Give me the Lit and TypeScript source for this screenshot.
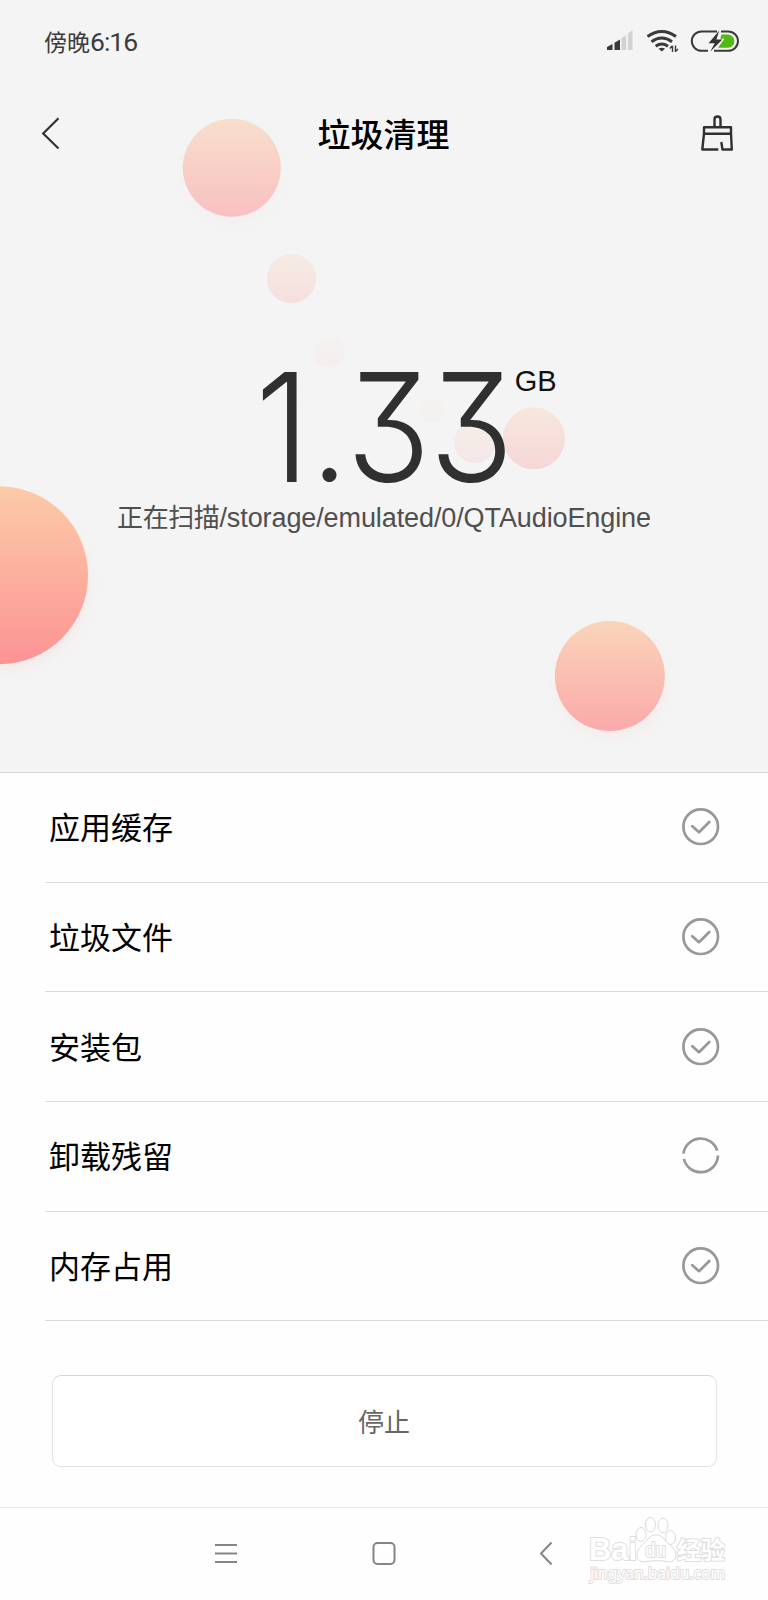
import { LitElement, html, css, svg } from "lit";
import { customElement, property } from "lit/decorators.js";

type Status = "done" | "scanning";

@customElement("status-icon")
class StatusIcon extends LitElement {
  @property() status: Status = "done";
  static styles = css`
    :host { display: block; width: 40px; height: 40px; }
    svg { display: block; }
  `;
  render() {
    const mark = this.status === "done"
      ? svg`<circle cx="19.700" cy="19.700" r="17.3"/><path d="M11.300 19.200l6.700 6 10.300-10.200" stroke-linecap="round" stroke-linejoin="round"/>`
      : svg`<path d="M2.500 17.700A17.3 17.3 0 0 1 36.2 14.700M37 19.500A17.3 17.3 0 0 1 2.900 23"/>`;
    return html`<svg width="40" height="40" fill="none" stroke="#989898" stroke-width="2.7">${mark}</svg>`;
  }
}

@customElement("app-root")
export class AppRoot extends LitElement {
  private rows: { name: string; status: Status }[] = [
    { name: "应用缓存", status: "done" },
    { name: "垃圾文件", status: "done" },
    { name: "安装包", status: "done" },
    { name: "卸载残留", status: "scanning" },
    { name: "内存占用", status: "done" },
  ];

  static styles = css`
    :host {
      display: flex; flex-direction: column; position: relative;
      width: 768px; height: 1600px; overflow: hidden; background: #fefefe; color: #000;
      font-family: "Liberation Sans", "Noto Sans CJK SC", sans-serif;
    }
    svg { display: block; }
    .hero {
      position: relative; z-index: 0; height: 773px; box-sizing: border-box; flex: none;
      background: #f4f4f4; border-bottom: 1px solid #d6d6d6;
      display: flex; flex-direction: column;
    }
    .bubbles { position: absolute; inset: 0; z-index: -1; }
    .statusbar {
      height: 84px; padding: 0 28px 0 44px; display: flex; align-items: center;
      justify-content: space-between; box-sizing: border-box; color: #3c3c3c;
    }
    .time { display: flex; align-items: center; font: 23px/30px "Noto Sans CJK SC", sans-serif; }
    .time span:first-child { padding-bottom: 2px; }
    .clock { font: 26.5px/30px Roboto, sans-serif; letter-spacing: -1px; }
    .header {
      height: 100px; padding: 0 34px 0 40px; display: flex; align-items: center;
      justify-content: space-between;
    }
    .title { margin: 0; font: 500 33px/48px "Noto Sans CJK SC", sans-serif; padding: 0 0 3px 3px; }
    .total { display: flex; margin: 173px 0 0 252px; height: 140px; color: #303030; }
    .digit {
      font: 300 151px/140px Inter, sans-serif; font-feature-settings: "cv09" 1;
      width: 83.3px; text-align: center; transform: scaleX(.92);
    }
    .one { width: 61px; }
    .dot {
      width: 33px; margin-right: -3.3px; font: 400 112px/140px Lato, sans-serif;
      transform: none; padding-top: 11px; height: 129px;
    }
    .unit { font-size: 29px; line-height: 34px; color: #111; margin: 7px 0 0 5.5px; }
    .path {
      display: flex; justify-content: center; font-size: 27px; line-height: 40px; color: #4f4f4f;
      letter-spacing: -0.1px; margin-top: 1px;
    }
    .verb { font: 26px/36px "Noto Sans CJK SC", sans-serif; letter-spacing: -0.4px; }
    .list { display: flex; flex-direction: column; padding-left: 45px; }
    .row {
      height: 109.7px; box-sizing: border-box; border-bottom: 1px solid #dcdcdc;
      display: flex; align-items: center; justify-content: space-between; padding: 0 47px 0 4px;
      font: 31px/46px "Noto Sans CJK SC", sans-serif;
    }
    .name { padding-bottom: 2px; }
    .stop {
      display: flex; align-items: center; justify-content: center; box-sizing: border-box;
      margin: 53.5px 51.5px 0; height: 92px; flex: none; border: 1px solid #e2e2e2; border-top-color: #d4d4d4;
      border-radius: 9px; background: #fff; color: #666; padding: 0;
      font: 26px/38px "Noto Sans CJK SC", sans-serif;
    }
    .nav {
      margin-top: 40.500px; border-top: 1px solid #ececec; flex: 1; display: flex;
      padding-left: 213px;
    }
    .watermark { position: absolute; left: 580px; top: 1510px; }
    .outlined { paint-order: stroke; stroke-width: 2px; stroke: #dedede; }
  `;

  render() {
    return html`
      <section class="hero">
        <svg class="bubbles" width="768" height="772">
          <defs>
            <linearGradient id="warm" x2="0" y2="1">
              <stop offset="0" stop-color="#fccba8"/><stop offset="1" stop-color="#fc9394"/>
            </linearGradient>
            <filter id="soft" x="-20%" y="-20%" width="150%" height="150%">
              <feDropShadow dx="2" dy="7" stdDeviation="6" flood-color="#ff8f8f" flood-opacity=".1"/>
            </filter>
          </defs>
          <g fill="url(#warm)">
            <circle cx="-1" cy="575.3" r="89" filter="url(#soft)"/>
            <circle cx="609.8" cy="676" r="55" opacity=".76" filter="url(#soft)"/>
            <circle cx="231.8" cy="167.8" r="49" opacity=".52" filter="url(#soft)"/>
            <circle cx="534" cy="438.3" r="31" opacity=".3"/>
            <circle cx="291.5" cy="278.5" r="24.6" opacity=".22"/>
            <circle cx="475" cy="442" r="21" opacity=".14"/>
            <circle cx="329" cy="352" r="15.5" opacity=".06"/>
            <circle cx="432" cy="411" r="12" opacity=".04"/>
          </g>
        </svg>
        <div class="statusbar">
          <div class="time"><span>傍晚</span><span class="clock">6:16</span></div>
          <svg width="134" height="28" viewBox="606 28 134 28">
            <path d="M607 50v-3l5.500-3v6zM614.500 50v-7.200l5.500-3.300v10.500z" fill="#3a3a3a"/>
            <path d="M621.500 50v-12l4.700-3v15zM628 50v-16.500l4.500-3.500v20z" fill="#d2d2d2"/>
            <g fill="none" stroke="#3a3a3a" stroke-width="3">
              <path d="M647.500 36.500q14.300-10 28.500 0M651.500 41.700q10.300-7.500 20.500 0M655.700 46.200q6-4.300 12.300 0"/>
            </g>
            <path d="M658.500 48.700q3.300-2 6.600 0l-3.300 2.800z" fill="#3a3a3a"/>
            <path d="M672.500 46v6M669.800 48.500l2.700-2.700M675.500 45.500v6.500M675.500 51.500l2.500-2.500" fill="none" stroke="#3a3a3a" stroke-width="1.4"/>
            <path d="M708 50.800h-6.500a9.700 9.700 0 0 1 0-19.400H717M721 31.400h7.300a9.700 9.700 0 0 1 0 19.400H714" fill="none" stroke="#3a3a3a" stroke-width="2"/>
            <path d="M721.500 34.500h7a6.700 6.700 0 0 1 0 13.300H718l6.500-9h-4.300z" fill="#50b914"/>
            <path d="M719.300 30.500l-10.800 12.800h6.200l-4.500 8.500 12.200-12.300h-6z" fill="#333"/>
          </svg>
        </div>
        <header class="header">
          <svg width="24" height="36" viewBox="40 116 24 36" fill="none" stroke="#333" stroke-width="2.200"><path d="M58.500 118.300L43.200 133.500l15.300 15"/></svg>
          <h1 class="title">垃圾清理</h1>
          <svg width="34" height="38" viewBox="700 115 34 38" fill="none" stroke="#303030" stroke-width="2.400" stroke-linejoin="round">
            <path d="M704 127.200h27v6.600h-27zM704 133.500l-1.700 16h16M731 133.500l.8 16h-9.300l-1.200-7.500M714.500 127v-7.500q0-3 3-3t3 3v7.500"/>
          </svg>
        </header>
        <div class="total">
          <span class="digit one">1</span><span class="digit dot">.</span><span class="digit">3</span><span class="digit">3</span><span class="unit">GB</span>
        </div>
        <div class="path"><span class="verb">正在扫描</span><span>/storage/emulated/0/QTAudioEngine</span></div>
      </section>
      <main class="list">
        ${this.rows.map((r) => html`<div class="row"><span class="name">${r.name}</span><status-icon .status=${r.status}></status-icon></div>`)}
      </main>
      <button class="stop">停止</button>
      <nav class="nav">
        <svg width="345" height="92" viewBox="213 1508 345 92" fill="none" stroke="#858585" stroke-width="2">
          <path d="M215 1545h22M215 1553.500h22M215 1562h22M551.500 1542.500l-10.500 11 10.500 11"/>
          <rect x="373.500" y="1543" width="21" height="21" rx="4"/>
        </svg>
      </nav>
      <svg class="watermark" width="160" height="82" viewBox="580 1510 160 82" fill="#fff" stroke="#dadada" stroke-width="1"
        font-family="Noto Sans CJK SC, sans-serif" font-weight="700">
        <text class="outlined" x="589" y="1560" font-size="31" font-family="Liberation Sans" textLength="48" lengthAdjust="spacingAndGlyphs">Bai</text>
        <g>
          <ellipse cx="641" cy="1534.500" rx="5" ry="7"/><ellipse cx="650.500" cy="1524.700" rx="5" ry="7.300"/>
          <ellipse cx="663" cy="1525.500" rx="5" ry="7.300"/><ellipse cx="670.500" cy="1537.500" rx="5" ry="7"/>
          <path d="M648 1539c4-5.500 12-5.500 16 0s12 9 12 16c0 6-5 7.500-9 6.500-6-1-15-1-21 0-5 1-9-1-9-6.500 0-7 7-11 11-16z"/>
        </g>
        <text class="outlined" x="645" y="1557" font-size="20" font-weight="400" font-family="Liberation Sans" textLength="21" lengthAdjust="spacingAndGlyphs">du</text>
        <text class="outlined" x="677" y="1559" font-size="24" textLength="48">经验</text>
        <text class="outlined" x="590" y="1579" font-size="17" font-weight="400" font-family="Noto Sans" textLength="135" lengthAdjust="spacingAndGlyphs">jingyan.baidu.com</text>
      </svg>
    `;
  }
}
